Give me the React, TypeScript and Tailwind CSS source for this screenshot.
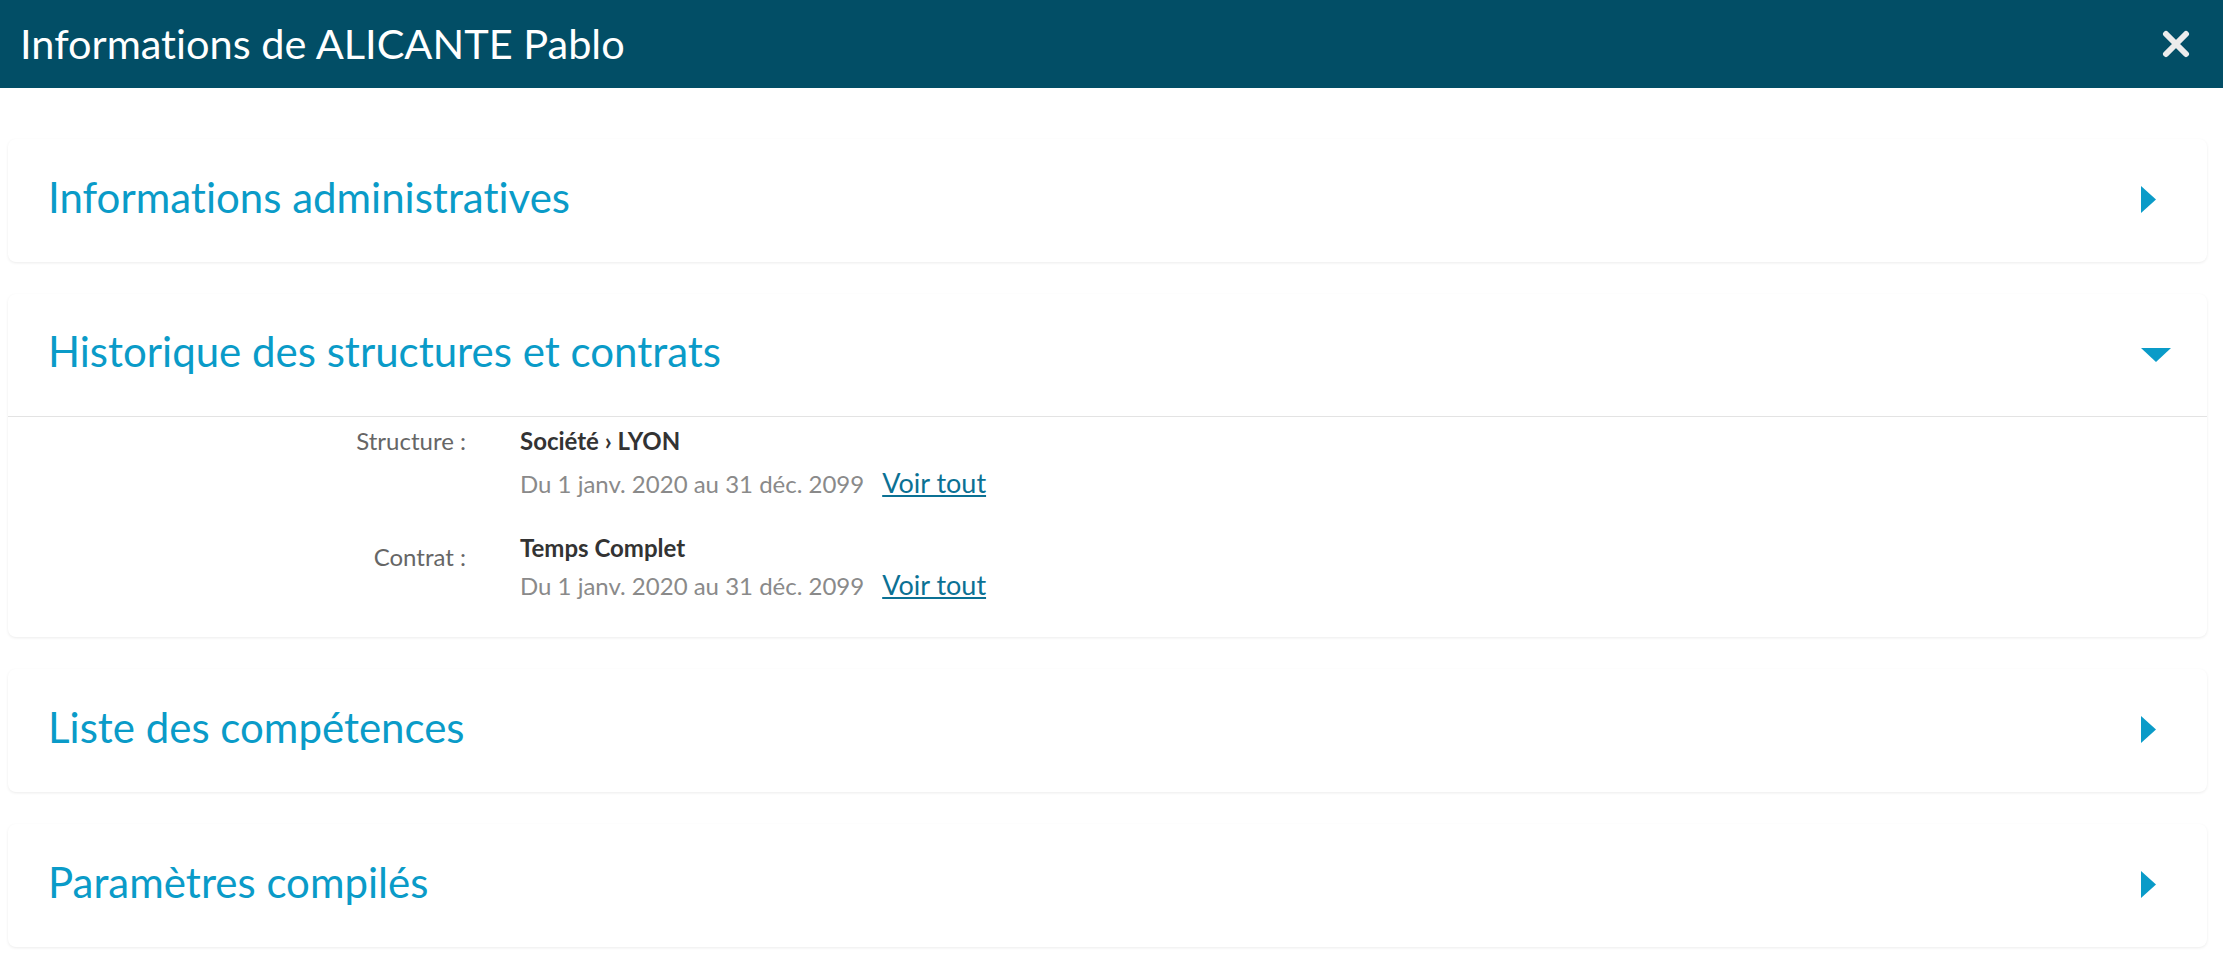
import React from "react";

function CaretRight() {
  return (
    <svg width="30" height="30" viewBox="0 0 30 30" className="text-[#0a9bc8]">
      <polygon points="0,0 15,13.5 0,27" fill="currentColor" />
    </svg>
  );
}

function CaretDown() {
  return (
    <svg width="30" height="30" viewBox="0 0 30 30" className="text-[#0a9bc8]">
      <polygon points="0,8 30,8 15,22" fill="currentColor" />
    </svg>
  );
}

function CloseIcon() {
  return (
    <svg width="28" height="28" viewBox="0 0 28 28" className="text-[#ececec]">
      <path d="M4 4L24 24M24 4L4 24" stroke="currentColor" strokeWidth="6" strokeLinecap="round" />
    </svg>
  );
}

function Section({ title, open = false, children }: { title: string; open?: boolean; children?: React.ReactNode }) {
  return (
    <div className="bg-white rounded-lg shadow-[0_1px_3px_rgba(0,0,0,0.08)]">
      <div className={"h-[123px] flex items-center justify-between pl-10 pr-9" + (open ? " border-b border-[#e3e3e3]" : "")}>
        <h2 className="text-[42px] text-[#0a9bc8] leading-none mb-[8px]">{title}</h2>
        {open ? <CaretDown /> : <CaretRight />}
      </div>
      {children}
    </div>
  );
}

function Period() {
  return (
    <div className="leading-[28px] text-[#8a8a8a]">
      Du 1 janv. 2020 au 31 déc. 2099
      <a href="#" className="ml-[18px] text-[27px] text-[#0b7194] underline underline-offset-2">Voir tout</a>
    </div>
  );
}

export default function App() {
  return (
    <div className="min-h-screen bg-white font-['Lato',sans-serif] [font-variant-ligatures:none]">
      <header className="h-[88px] bg-[#024e66] flex items-center justify-between pl-5 pr-[33px]">
        <h1 className="text-white text-[41.5px] leading-none">Informations de ALICANTE Pablo</h1>
        <CloseIcon />
      </header>

      <div className="pl-2 pr-4 pt-[51px] pb-6 flex flex-col gap-8">
        <Section title="Informations administratives" />

        <Section title="Historique des structures et contrats" open>
          <div className="grid grid-cols-[458px_1fr] gap-x-[54px] gap-y-9 pt-[10px] pb-[37px] text-[24px]">
            <div className="text-right text-[#666] leading-[28px]">Structure :</div>
            <div className="flex flex-col gap-[14px]">
              <div className="font-bold text-[#333] leading-[28px]">Société › LYON</div>
              <Period />
            </div>

            <div className="text-right text-[#666] leading-[28px] pt-[9px]">Contrat :</div>
            <div className="flex flex-col gap-[9px]">
              <div className="font-bold text-[#333] leading-[28px]">Temps Complet</div>
              <Period />
            </div>
          </div>
        </Section>

        <Section title="Liste des compétences" />
        <Section title="Paramètres compilés" />
      </div>
    </div>
  );
}
